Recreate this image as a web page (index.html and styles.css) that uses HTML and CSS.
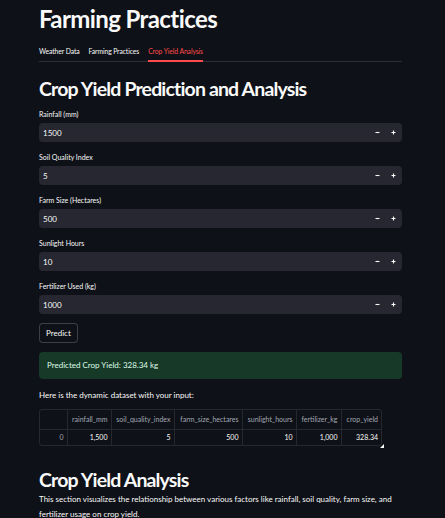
FILE: index.html
```html
<!DOCTYPE html>
<html>
<head>
<meta charset="utf-8">
<link rel="stylesheet" href="styles.css">
</head>
<body>
<main class="page">
  <h1 class="title">Farming Practices</h1>
  <nav class="tabs">
    <span class="tab">Weather Data</span>
    <span class="tab">Farming Practices</span>
    <span class="tab active">Crop Yield Analysis</span>
  </nav>
  <h2 class="heading">Crop Yield Prediction and Analysis</h2>
  <div class="fields">
    <div class="field">
      <label class="label">Rainfall (mm)</label>
      <div class="input"><span class="value">1500</span><span class="steps"><svg class="step" viewBox="0 0 7 7"><path d="M1.5 3.5h4" stroke="#fafafa" stroke-width="1.1"/></svg><svg class="step" viewBox="0 0 7 7"><path d="M1.5 3.5h4M3.5 1.5v4" stroke="#fafafa" stroke-width="1.1"/></svg></span></div>
    </div>
    <div class="field">
      <label class="label">Soil Quality Index</label>
      <div class="input"><span class="value">5</span><span class="steps"><svg class="step" viewBox="0 0 7 7"><path d="M1.5 3.5h4" stroke="#fafafa" stroke-width="1.1"/></svg><svg class="step" viewBox="0 0 7 7"><path d="M1.5 3.5h4M3.5 1.5v4" stroke="#fafafa" stroke-width="1.1"/></svg></span></div>
    </div>
    <div class="field">
      <label class="label">Farm Size (Hectares)</label>
      <div class="input"><span class="value">500</span><span class="steps"><svg class="step" viewBox="0 0 7 7"><path d="M1.5 3.5h4" stroke="#fafafa" stroke-width="1.1"/></svg><svg class="step" viewBox="0 0 7 7"><path d="M1.5 3.5h4M3.5 1.5v4" stroke="#fafafa" stroke-width="1.1"/></svg></span></div>
    </div>
    <div class="field">
      <label class="label">Sunlight Hours</label>
      <div class="input"><span class="value">10</span><span class="steps"><svg class="step" viewBox="0 0 7 7"><path d="M1.5 3.5h4" stroke="#fafafa" stroke-width="1.1"/></svg><svg class="step" viewBox="0 0 7 7"><path d="M1.5 3.5h4M3.5 1.5v4" stroke="#fafafa" stroke-width="1.1"/></svg></span></div>
    </div>
    <div class="field">
      <label class="label">Fertilizer Used (kg)</label>
      <div class="input"><span class="value">1000</span><span class="steps"><svg class="step" viewBox="0 0 7 7"><path d="M1.5 3.5h4" stroke="#fafafa" stroke-width="1.1"/></svg><svg class="step" viewBox="0 0 7 7"><path d="M1.5 3.5h4M3.5 1.5v4" stroke="#fafafa" stroke-width="1.1"/></svg></span></div>
    </div>
  </div>
  <button class="btn">Predict</button>
  <div class="success">Predicted Crop Yield: 328.34 kg</div>
  <p class="text">Here is the dynamic dataset with your input:</p>
  <div class="table-wrap">
    <table class="table">
      <thead>
        <tr><th class="c0"></th><th class="c1">rainfall_mm</th><th class="c2">soil_quality_index</th><th class="c3">farm_size_hectares</th><th class="c4">sunlight_hours</th><th class="c5">fertilizer_kg</th><th class="c6">crop_yield</th></tr>
      </thead>
      <tbody>
        <tr><td class="idx">0</td><td>1,500</td><td>5</td><td>500</td><td>10</td><td>1,000</td><td>328.34</td></tr>
      </tbody>
    </table>
    <span class="grip"></span>
  </div>
  <h2 class="heading heading2">Crop Yield Analysis</h2>
  <p class="text para">This section visualizes the relationship between various factors like rainfall, soil quality, farm size, and fertilizer usage on crop yield.</p>
</main>
</body>
</html>
```
FILE: styles.css
```css
html, body {
  margin: 0;
  padding: 0;
  background: #0e1117;
  color: #fafafa;
  font-family: "Lato", "Liberation Sans", sans-serif;
}
.page {
  width: 363px;
  margin-left: 39px;
  padding-top: 4px;
}
.title {
  margin: 0;
  font-size: 24px;
  line-height: 30px;
  font-weight: 700;
  letter-spacing: -0.6px;
}
.tabs {
  display: flex;
  gap: 9px;
  margin-top: 8px;
  border-bottom: 1px solid #2b2e36;
  height: 19px;
}
.tab {
  font-size: 6.8px;
  line-height: 18px;
  color: #fafafa;
  letter-spacing: -0.1px;
}
.tab.active {
  color: #ff4b4b;
  border-bottom: 2px solid #ff4b4b;
  height: 18px;
}
.heading {
  margin: 14px 0 0;
  font-size: 19.5px;
  line-height: 26px;
  font-weight: 700;
  letter-spacing: -0.85px;
}
.fields {
  display: flex;
  flex-direction: column;
  gap: 9px;
  margin-top: 6px;
}
.field {
  display: flex;
  flex-direction: column;
}
.label {
  font-size: 7px;
  line-height: 12px;
  margin-bottom: 3px;
}
.input {
  height: 19px;
  background: #262730;
  border-radius: 4px;
  display: flex;
  align-items: center;
  justify-content: space-between;
  padding: 0 5px 0 4px;
}
.value {
  font-size: 8px;
}
.steps {
  display: flex;
  gap: 9px;
}
.step {
  width: 7px;
  height: 7px;
}
.btn {
  display: block;
  margin-top: 9px;
  height: 20px;
  padding: 0 6px;
  background: #0e1117;
  color: #fafafa;
  border: 1px solid rgba(250,250,250,0.2);
  border-radius: 4px;
  font-family: inherit;
  font-size: 8px;
}
.success {
  margin-top: 9px;
  height: 27px;
  line-height: 27px;
  padding-left: 8px;
  background: #173928;
  color: #dffde9;
  border-radius: 4px;
  font-size: 8px;
}
.text {
  margin: 0;
  font-size: 8px;
}
.success + .text {
  margin-top: 10px;
  line-height: 12px;
}
.table-wrap {
  position: relative;
  margin-top: 8px;
  width: 341px;
  border: 1px solid rgba(250,250,250,0.1);
  border-radius: 3px;
}
.table {
  border-collapse: collapse;
  width: 100%;
  font-size: 7px;
  table-layout: fixed;
}
.table th, .table td {
  box-sizing: border-box;
  border-left: 1px solid rgba(250,250,250,0.1);
  padding: 0 3px;
  text-align: right;
  white-space: nowrap;
  overflow: hidden;
}
.table th:first-child, .table td:first-child { border-left: none; }
.table th {
  height: 19px;
  color: #a3a8b4;
  font-weight: 400;
  border-bottom: 1px solid rgba(250,250,250,0.1);
}
.table td { height: 16px; }
.table td.idx { color: #a3a8b4; }
.c0 { width: 27px; }
.c1 { width: 44px; }
.c2 { width: 63px; }
.c3 { width: 68px; }
.c4 { width: 54px; }
.c5 { width: 45px; }
.c6 { width: 40px; }
.grip {
  position: absolute;
  right: -3px;
  bottom: -3px;
  width: 0;
  height: 0;
  border-left: 4px solid transparent;
  border-bottom: 4px solid #fafafa;
}
.heading2 {
  margin-top: 22px;
  line-height: 24px;
}
.para {
  margin-top: 0;
  line-height: 15px;
}
```
